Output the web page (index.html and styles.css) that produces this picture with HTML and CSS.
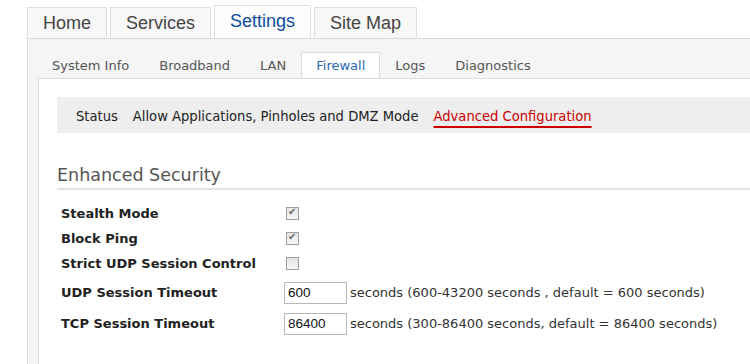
FILE: index.html
```html
<!DOCTYPE html>
<html lang="en">

<head>
    <meta charset="UTF-8">
    <meta name="viewport" content="width=device-width, initial-scale=1.0">
    <title>Firewall - Advanced Configuration</title>
    <link rel="stylesheet" href="styles.css">
</head>

<body>
    <div class="page">
        <ul class="main-tabs">
            <li class="main-tab">Home</li>
            <li class="main-tab">Services</li>
            <li class="main-tab active">Settings</li>
            <li class="main-tab">Site Map</li>
        </ul>

        <div class="main-panel">
            <ul class="sub-tabs">
                <li class="sub-tab">System Info</li>
                <li class="sub-tab">Broadband</li>
                <li class="sub-tab">LAN</li>
                <li class="sub-tab active">Firewall</li>
                <li class="sub-tab">Logs</li>
                <li class="sub-tab">Diagnostics</li>
            </ul>

            <div class="content">
                <ul class="section-nav">
                    <li>Status</li>
                    <li>Allow Applications, Pinholes and DMZ Mode</li>
                    <li class="active">Advanced Configuration</li>
                </ul>

                <h2 class="section-title">Enhanced Security</h2>

                <div class="settings">
                    <div class="row">
                        <label class="label" for="stealth">Stealth Mode</label>
                        <div class="field"><input type="checkbox" id="stealth" checked></div>
                    </div>
                    <div class="row">
                        <label class="label" for="ping">Block Ping</label>
                        <div class="field"><input type="checkbox" id="ping" checked></div>
                    </div>
                    <div class="row">
                        <label class="label" for="strict">Strict UDP Session Control</label>
                        <div class="field"><input type="checkbox" id="strict"></div>
                    </div>
                    <div class="row row-input first-input">
                        <label class="label" for="udp">UDP Session Timeout</label>
                        <div class="field">
                            <input type="text" id="udp" class="text-input" value="600">
                            <span class="hint">seconds (600-43200 seconds , default = 600 seconds)</span>
                        </div>
                    </div>
                    <div class="row row-input">
                        <label class="label" for="tcp">TCP Session Timeout</label>
                        <div class="field">
                            <input type="text" id="tcp" class="text-input" value="86400">
                            <span class="hint">seconds (300-86400 seconds, default = 86400 seconds)</span>
                        </div>
                    </div>
                </div>
            </div>
        </div>
    </div>
</body>

</html>
```

FILE: styles.css
```css
body {
    margin: 0;
    background-color: #fff;
    font-family: "DejaVu Sans", Verdana, sans-serif;
    font-size: 13px;
    color: #222;
    overflow: hidden;
}

ul {
    list-style: none;
    margin: 0;
    padding: 0;
}

.page {
    padding: 5px 0 0 27px;
    height: 359px;
    display: flex;
    flex-direction: column;
}

/* top level tabs */

.main-tabs {
    display: flex;
    align-items: flex-end;
    gap: 3px;
}

.main-tab {
    height: 30px;
    line-height: 30px;
    padding: 0 15px;
    font-family: "Liberation Sans", Arial, sans-serif;
    font-size: 18px;
    color: #444;
    background-color: #f7f7f7;
    border: 1px solid #dedede;
    border-bottom: none;
    cursor: pointer;
}

.main-tab.active {
    height: 32px;
    line-height: 30px;
    color: #0b4c9c;
    background-color: #fdfdfd;
}

/* panel under the tabs */

.main-panel {
    flex: 1;
    display: flex;
    flex-direction: column;
    background-color: #f5f5f5;
    border-top: 1px solid #d9d9d9;
    border-left: 1px solid #dedede;
}

.sub-tabs {
    display: flex;
    align-items: flex-end;
    height: 39px;
    padding-left: 9px;
}

.sub-tab {
    height: 25px;
    line-height: 25px;
    padding: 0 14px;
    color: #555;
    border: 1px solid transparent;
    border-bottom: none;
    cursor: pointer;
}

.sub-tab.active {
    color: #2b67b0;
    background-color: #fff;
    border-color: #dcdcdc;
}

.content {
    flex: 1;
    margin-left: 10px;
    padding: 18px 0 0 18px;
    background-color: #fff;
    border-top: 1px solid #dcdcdc;
    border-left: 1px solid #dcdcdc;
}

/* third level navigation */

.section-nav {
    display: flex;
    align-items: center;
    gap: 15px;
    height: 36px;
    padding-left: 19px;
    background-color: #eee;
    font-family: "DejaVu Sans Condensed", "DejaVu Sans", sans-serif;
    font-stretch: condensed;
    font-size: 14.6px;
    color: #222;
}

.section-nav li {
    cursor: pointer;
}

.section-nav .active {
    color: #cc0000;
    text-decoration: underline 2px #cc0000;
    text-underline-offset: 5px;
}

.section-title {
    margin: 31px 0 0;
    padding-bottom: 2px;
    font-size: 17.5px;
    font-weight: normal;
    line-height: 22px;
    color: #555;
    border-bottom: 2px solid #e3e3e3;
}

/* settings rows */

.settings {
    margin-top: 11px;
}

.row {
    display: grid;
    grid-template-columns: 227px auto;
    align-items: center;
    height: 25px;
}

.row-input {
    height: 31px;
}

.first-input {
    margin-top: 1px;
}

.label {
    padding-left: 4px;
    font-weight: bold;
    color: #222;
}

.field {
    display: flex;
    align-items: center;
}

input[type="checkbox"] {
    appearance: none;
    width: 13px;
    height: 13px;
    margin: 0 0 0 2px;
    border: 1px solid #9c9c9c;
    background: linear-gradient(#e4e4e4, #f6f6f6);
    position: relative;
}

input[type="checkbox"]:checked::after {
    content: "\2714";
    position: absolute;
    left: 1px;
    top: -2px;
    font-size: 10px;
    color: #6a6a6a;
}

.text-input {
    width: 63px;
    height: 22px;
    box-sizing: border-box;
    margin: 0;
    padding: 0 3px;
    border: 1px solid #b8b8b8;
    font-family: "Liberation Sans", Arial, sans-serif;
    font-size: 13.5px;
    color: #111;
}

.hint {
    margin-left: 3px;
    color: #333;
}
```
